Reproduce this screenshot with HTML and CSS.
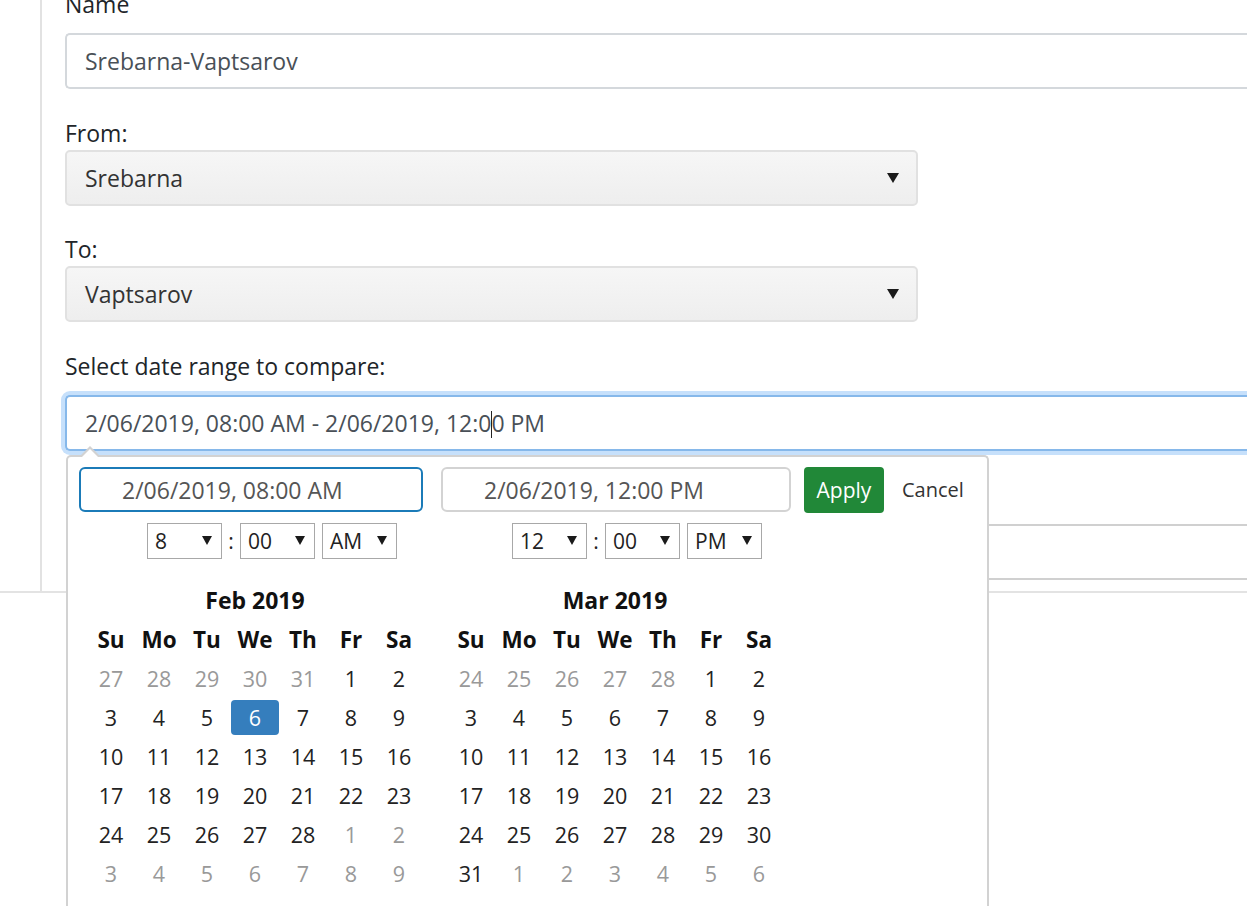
FILE: index.html
```html
<!DOCTYPE html>
<html lang="en">
<head>
<meta charset="utf-8">
<title>Route compare</title>
<link rel="stylesheet" href="styles.css">
</head>
<body>
<div class="layout">
  <aside class="side"></aside>
  <main class="main">
    <form class="form">
      <label class="lbl lbl-name">Name</label>
      <div class="control">Srebarna-Vaptsarov</div>

      <label class="lbl">From:</label>
      <div class="select"><span>Srebarna</span><i class="tri"></i></div>

      <label class="lbl">To:</label>
      <div class="select"><span>Vaptsarov</span><i class="tri"></i></div>

      <label class="lbl lbl-range">Select date range to compare:</label>
      <div class="range-field">
        <div class="control focus">2/06/2019, 08:00 AM - 2/06/2019, 12:0<span class="caret"></span>0 PM</div>

        <div class="drp">
          <div class="drp-inner">
            <div class="cal-col col-left">
              <div class="drp-input active">2/06/2019, 08:00 AM</div>
              <div class="time time-left">
                <div class="tsel"><span>8</span><i class="tri small"></i></div>
                <span class="colon">:</span>
                <div class="tsel"><span>00</span><i class="tri small"></i></div>
                <div class="tsel ampm"><span>AM</span><i class="tri small"></i></div>
              </div>
              <table class="cal cal-left">
                <thead>
                  <tr><th colspan="7" class="month">Feb 2019</th></tr>
                  <tr><th>Su</th><th>Mo</th><th>Tu</th><th>We</th><th>Th</th><th>Fr</th><th>Sa</th></tr>
                </thead>
                <tbody>
                  <tr><td class="off">27</td><td class="off">28</td><td class="off">29</td><td class="off">30</td><td class="off">31</td><td>1</td><td>2</td></tr>
                  <tr><td>3</td><td>4</td><td>5</td><td class="active">6</td><td>7</td><td>8</td><td>9</td></tr>
                  <tr><td>10</td><td>11</td><td>12</td><td>13</td><td>14</td><td>15</td><td>16</td></tr>
                  <tr><td>17</td><td>18</td><td>19</td><td>20</td><td>21</td><td>22</td><td>23</td></tr>
                  <tr><td>24</td><td>25</td><td>26</td><td>27</td><td>28</td><td class="off">1</td><td class="off">2</td></tr>
                  <tr><td class="off">3</td><td class="off">4</td><td class="off">5</td><td class="off">6</td><td class="off">7</td><td class="off">8</td><td class="off">9</td></tr>
                </tbody>
              </table>
            </div>

            <div class="cal-col col-right">
              <div class="drp-input">2/06/2019, 12:00 PM</div>
              <div class="time time-right">
                <div class="tsel"><span>12</span><i class="tri small"></i></div>
                <span class="colon">:</span>
                <div class="tsel"><span>00</span><i class="tri small"></i></div>
                <div class="tsel ampm"><span>PM</span><i class="tri small"></i></div>
              </div>
              <table class="cal cal-right">
                <thead>
                  <tr><th colspan="7" class="month">Mar 2019</th></tr>
                  <tr><th>Su</th><th>Mo</th><th>Tu</th><th>We</th><th>Th</th><th>Fr</th><th>Sa</th></tr>
                </thead>
                <tbody>
                  <tr><td class="off">24</td><td class="off">25</td><td class="off">26</td><td class="off">27</td><td class="off">28</td><td>1</td><td>2</td></tr>
                  <tr><td>3</td><td>4</td><td>5</td><td>6</td><td>7</td><td>8</td><td>9</td></tr>
                  <tr><td>10</td><td>11</td><td>12</td><td>13</td><td>14</td><td>15</td><td>16</td></tr>
                  <tr><td>17</td><td>18</td><td>19</td><td>20</td><td>21</td><td>22</td><td>23</td></tr>
                  <tr><td>24</td><td>25</td><td>26</td><td>27</td><td>28</td><td>29</td><td>30</td></tr>
                  <tr><td>31</td><td class="off">1</td><td class="off">2</td><td class="off">3</td><td class="off">4</td><td class="off">5</td><td class="off">6</td></tr>
                </tbody>
              </table>
            </div>

            <div class="btns">
              <button type="button" class="btn-apply">Apply</button>
              <button type="button" class="btn-cancel">Cancel</button>
            </div>
          </div>
        </div>
      </div>

      <div class="control control-under"></div>
    </form>
  </main>
</div>
</body>
</html>
```

FILE: styles.css
```css
html {
  background: #fff;
}

body {
  margin: 0;
  padding: 0;
  min-height: 906px;
  font-family: "Open Sans", "Noto Sans", sans-serif;
  font-size: 23px;
  color: #212529;
}

.layout {
  display: flex;
  border-bottom: 2px solid #e3e3e3;
}

.side {
  flex: none;
  width: 40px;
  border-right: 2px solid #e2e2e2;
}

.main {
  flex: 1;
  min-width: 0;
  padding-left: 23px;
  padding-bottom: 11px;
}

.form {
  display: flex;
  flex-direction: column;
  align-items: flex-start;
}

.lbl {
  display: block;
  line-height: 32px;
  margin: 27.5px 0 1px;
  color: #212529;
}

.lbl-name {
  margin-top: -12px;
  margin-bottom: 13px;
}

.lbl-range {
  margin-bottom: 13px;
}

/* the text fields continue past the right edge of the window */
.control {
  box-sizing: border-box;
  align-self: stretch;
  height: 56px;
  border: 2px solid #d4d8dc;
  border-right: 0;
  border-radius: 5px 0 0 5px;
  padding: 0 18px;
  line-height: 53px;
  color: #495057;
  background: #fff;
  white-space: nowrap;
}

.range-field {
  position: relative;
  align-self: stretch;
  display: flex;
  flex-direction: column;
}

.control.focus {
  border-color: #86b8ea;
  box-shadow: 0 0 0 4px #c6e0fb;
}

.caret {
  display: inline-block;
  width: 1px;
  height: 27px;
  background: #222;
  vertical-align: -6px;
  margin: 0 -0.5px;
}

.control-under {
  margin-top: 73px;
  margin-left: 1px;
  border-color: #d0d0d0;
}

.select {
  box-sizing: border-box;
  width: 853px;
  height: 56px;
  border: 2px solid #e1e1e1;
  border-radius: 5px;
  background: linear-gradient(#f6f6f6, #eeeeee);
  padding: 0 17px 0 18px;
  display: flex;
  align-items: center;
  justify-content: space-between;
  color: #333;
}

.tri {
  display: block;
  width: 0;
  height: 0;
  border-left: 6px solid transparent;
  border-right: 6px solid transparent;
  border-top: 10px solid #1a1a1a;
}

.tri.small {
  border-left-width: 5px;
  border-right-width: 5px;
  border-top-width: 9px;
}

/* ---------- date range picker ---------- */
.drp {
  position: absolute;
  top: 60px;
  left: 1px;
  box-sizing: border-box;
  width: 923px;
  height: 451px;
  background: #fff;
  border: 2px solid #d2d2d2;
  border-bottom: 0;
  border-radius: 5px 5px 0 0;
  padding: 10px 11px 0;
  z-index: 5;
  font-size: 21.5px;
}

.drp::before {
  content: "";
  position: absolute;
  top: -11px;
  left: 12px;
  border-left: 10px solid transparent;
  border-right: 10px solid transparent;
  border-bottom: 10px solid #d2d2d2;
}

.drp::after {
  content: "";
  position: absolute;
  top: -8px;
  left: 13px;
  border-left: 9px solid transparent;
  border-right: 9px solid transparent;
  border-bottom: 9px solid #fff;
}

.drp-inner {
  display: flex;
  align-items: flex-start;
}

.col-left {
  width: 344px;
}

.col-right {
  width: 350px;
  margin-left: 18px;
}

.drp-input {
  box-sizing: border-box;
  height: 45px;
  border: 2px solid #d3d3d3;
  border-radius: 6px;
  padding-left: 41px;
  line-height: 42px;
  font-size: 23px;
  color: #555;
  white-space: nowrap;
}

.drp-input.active {
  border-color: #1b7bb8;
}

.time {
  display: flex;
  align-items: center;
  margin-top: 11px;
  height: 36px;
  font-size: 21px;
}

.time-left {
  margin-left: 68px;
}

.time-right {
  margin-left: 71px;
}

.tsel {
  box-sizing: border-box;
  width: 75px;
  height: 36px;
  border: 1px solid #a8a8a8;
  background: #fff;
  display: flex;
  align-items: center;
  justify-content: space-between;
  padding: 0 9px 0 7px;
  color: #222;
}

.colon {
  width: 18px;
  text-align: center;
  color: #222;
}

.tsel.ampm {
  margin-left: 7px;
}

.cal {
  border-collapse: separate;
  border-spacing: 0 4px;
  margin-top: 20px;
}

.cal-left {
  margin-left: 8px;
}

.cal-right {
  margin-left: 6px;
}

.cal th,
.cal td {
  width: 48px;
  height: 35px;
  padding: 0;
  text-align: center;
  line-height: 35px;
  white-space: nowrap;
}

.cal th {
  font-weight: 700;
  font-size: 22.5px;
  color: #111;
}

.cal th.month {
  font-size: 23px;
}

.cal td {
  color: #222;
}

.cal td.off {
  color: #999;
}

.cal td.active {
  background: #357ebd;
  color: #fff;
  border-radius: 4px;
}

.btns {
  display: flex;
  align-items: center;
  margin-left: 13px;
}

.btn-apply {
  box-sizing: border-box;
  width: 80px;
  height: 46px;
  border: 0;
  border-radius: 4px;
  background: #218838;
  color: #fff;
  font-family: inherit;
  font-size: 21px;
  padding: 0;
}

.btn-cancel {
  border: 0;
  background: transparent;
  color: #333;
  font-family: inherit;
  font-size: 20px;
  padding: 0;
  margin-left: 18px;
}
```
